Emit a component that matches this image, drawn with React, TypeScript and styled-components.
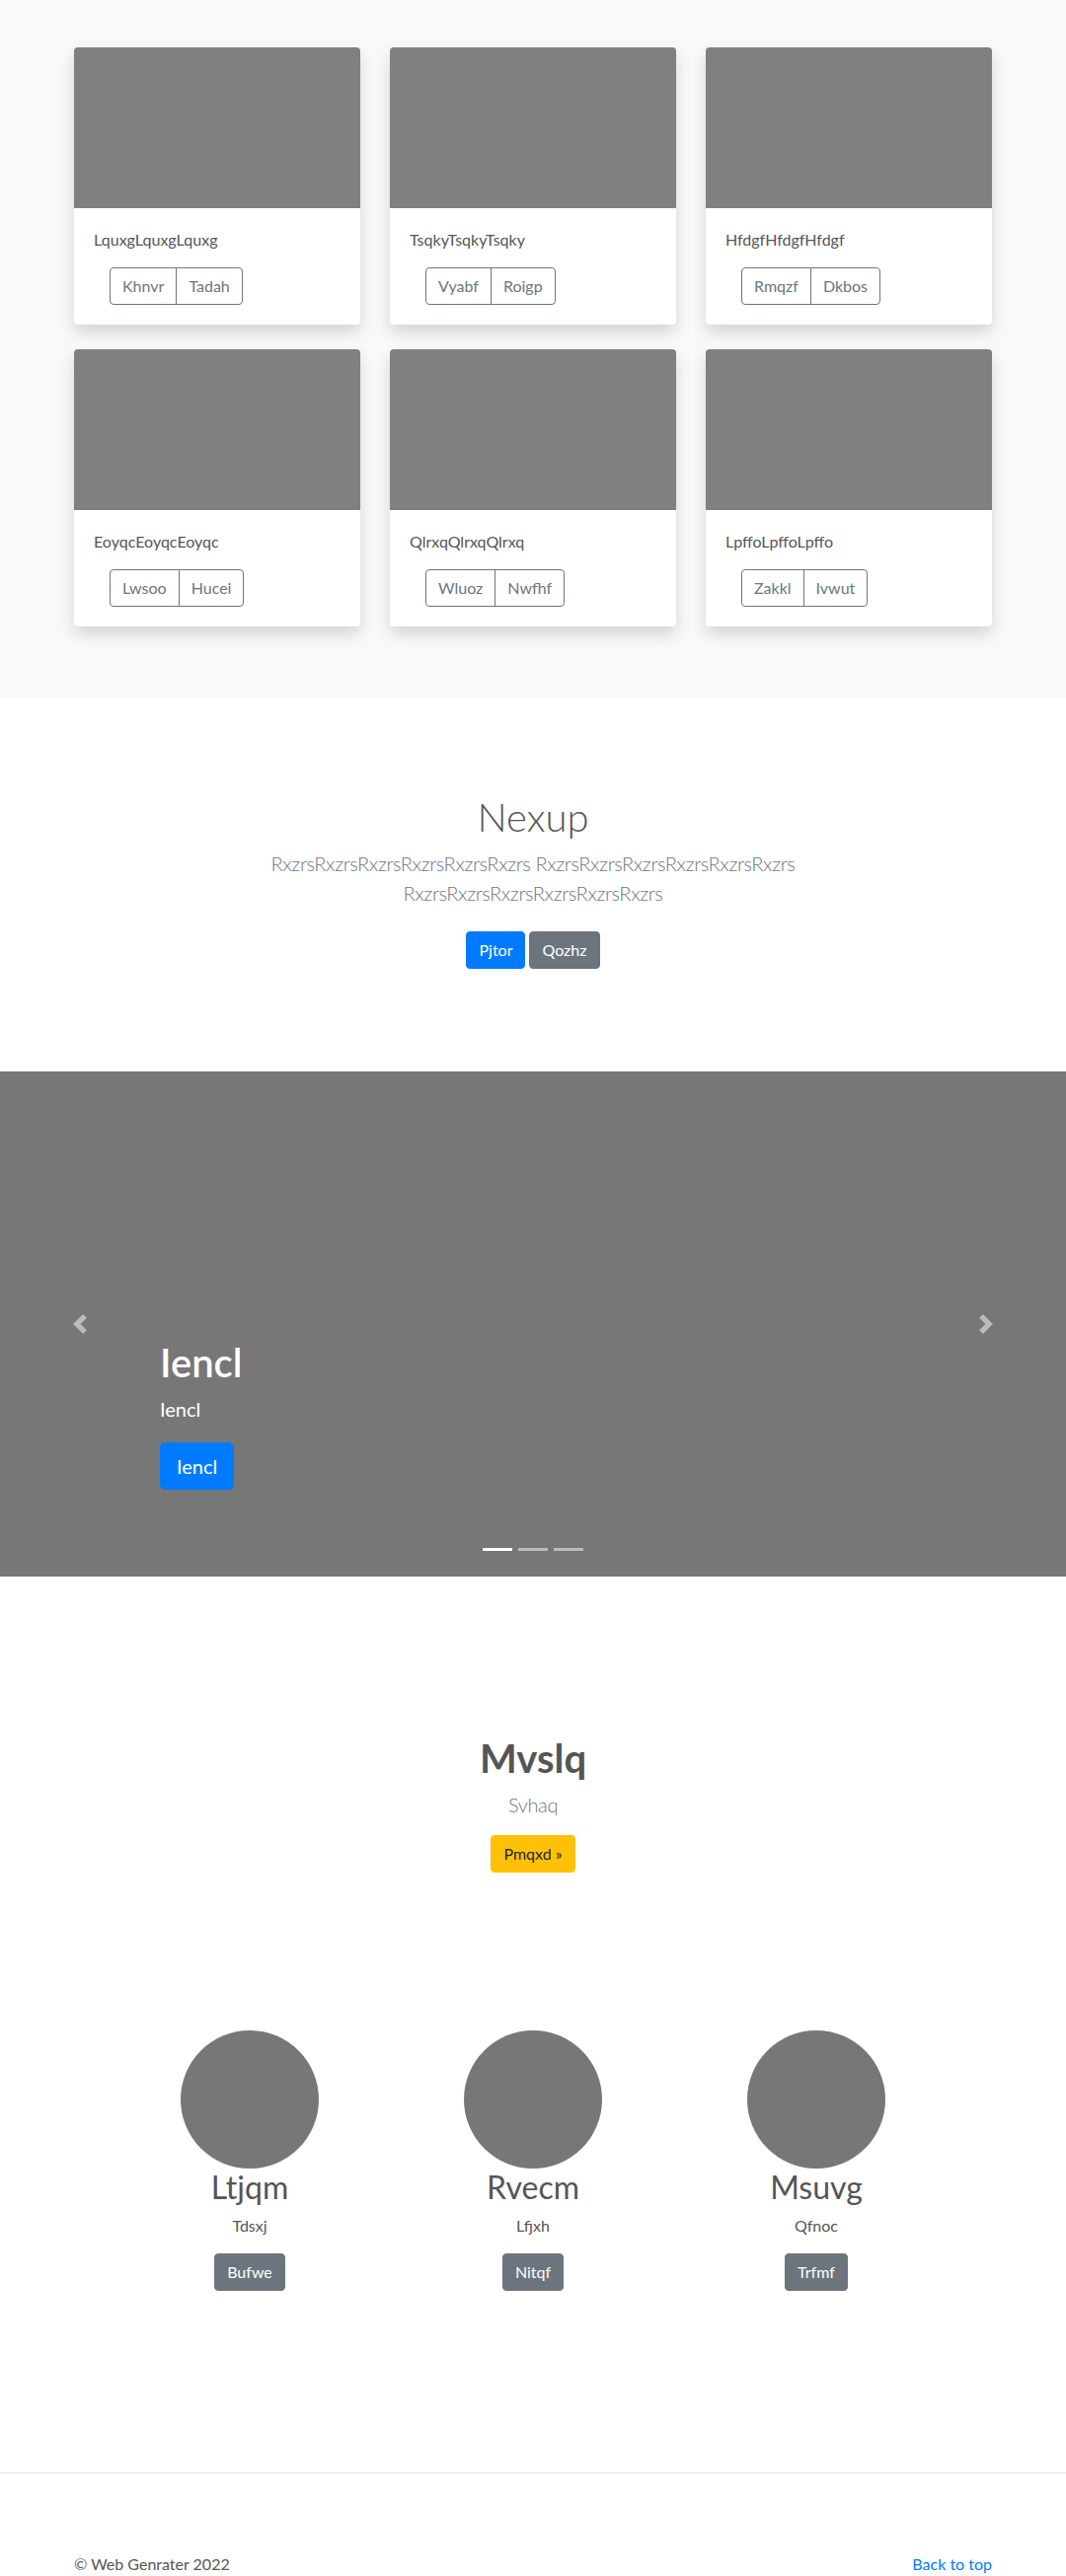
import React from 'react';
import styled, { createGlobalStyle, css } from 'styled-components';

const GlobalStyle = createGlobalStyle`
  *, *::before, *::after { box-sizing: border-box; }
  html, body { margin: 0; padding: 0; }
  body {
    font-family: Lato, "Open Sans", sans-serif;
    font-size: 16px;
    line-height: 1.5;
    color: #555;
    background: #fff;
  }
`;

type Variant = 'primary' | 'secondary' | 'warning';

const variants: Record<Variant, ReturnType<typeof css>> = {
  primary: css`background: #007bff; border-color: #007bff; color: #fff;`,
  secondary: css`background: #6c757d; border-color: #6c757d; color: #fff;`,
  warning: css`background: #ffc107; border-color: #ffc107; color: #212529;`,
};

const Btn = styled.button<{ $variant: Variant; $lg?: boolean }>`
  display: inline-block;
  font-family: inherit;
  font-weight: 400;
  border: 1px solid transparent;
  border-radius: ${(p) => (p.$lg ? '5px' : '4px')};
  font-size: ${(p) => (p.$lg ? '20px' : '16px')};
  line-height: ${(p) => (p.$lg ? '30px' : '24px')};
  padding: ${(p) => (p.$lg ? '8px 16px' : '6px 12px')};
  cursor: pointer;
  ${(p) => variants[p.$variant]}
`;

/* ---------- Album ---------- */
const AlbumSection = styled.section`
  background: #f8f9fa;
  padding: 48px 0 73px;
`;

const Container = styled.div`
  width: 930px;
  margin: 0 auto;
`;

const CardGrid = styled.div`
  display: grid;
  grid-template-columns: repeat(3, 290px);
  column-gap: 30px;
  row-gap: 25px;
`;

const Card = styled.div`
  background: #fff;
  border-radius: 4px;
  overflow: hidden;
  box-shadow: 0 8px 16px rgba(0, 0, 0, 0.15);
`;

const CardImage = styled.div`
  height: 163px;
  background: #808080;
`;

const CardBody = styled.div`
  padding: 20px;
`;

const CardText = styled.p`
  margin: 0 0 16px;
  font-size: 16px;
  line-height: 24px;
  color: #555;
`;

const BtnGroup = styled.div`
  display: inline-flex;
  margin-left: 16px;
`;

const OutlineBtn = styled.button`
  font-family: inherit;
  font-size: 16px;
  line-height: 24px;
  padding: 6px 12px;
  background: transparent;
  color: #6c757d;
  border: 1px solid #6c757d;
  border-radius: 0;
  cursor: pointer;
  &:first-child { border-radius: 4px 0 0 4px; }
  &:last-child { border-radius: 0 4px 4px 0; margin-left: -1px; }
`;

/* ---------- Jumbotron ---------- */
const Jumbotron = styled.section`
  padding: 96px 0;
  text-align: center;
  background: #fff;
`;

const JumboInner = styled.div`
  max-width: 610px;
  margin: 0 auto;
`;

const JumboTitle = styled.h1`
  margin: 0 0 8px;
  font-size: 40px;
  line-height: 48px;
  font-weight: 300;
  color: #555;
`;

const Lead = styled.p`
  margin: 0 0 16px;
  font-size: 20px;
  line-height: 30px;
  font-weight: 300;
  letter-spacing: -0.35px;
  color: #6c757d;
`;

const ButtonRow = styled.div`
  display: flex;
  justify-content: center;
  gap: 4px;
  padding: 8px 0;
`;

/* ---------- Carousel ---------- */
const Carousel = styled.section`
  position: relative;
  height: 512px;
  background: #777;
  overflow: hidden;
`;

const Control = styled.button<{ $side: 'prev' | 'next' }>`
  position: absolute;
  top: 0;
  bottom: 0;
  ${(p) => (p.$side === 'prev' ? 'left: 0;' : 'right: 0;')}
  width: 15%;
  display: flex;
  align-items: center;
  justify-content: center;
  background: none;
  border: 0;
  padding: 0;
  opacity: 0.5;
  cursor: pointer;
`;

const Caption = styled.div`
  position: absolute;
  left: 15%;
  right: 15%;
  bottom: 88px;
  color: #fff;
  text-align: left;
`;

const CaptionTitle = styled.h1`
  margin: 0 0 8px;
  font-size: 40px;
  line-height: 48px;
  font-weight: 600;
`;

const CaptionText = styled.p`
  margin: 0 0 19px;
  font-size: 20px;
  line-height: 30px;
`;

const Indicators = styled.ol`
  position: absolute;
  left: 0;
  right: 0;
  bottom: 26px;
  display: flex;
  justify-content: center;
  gap: 6px;
  margin: 0;
  padding: 0;
  list-style: none;
`;

const Indicator = styled.li<{ $active?: boolean }>`
  width: 30px;
  height: 3px;
  background: #fff;
  opacity: ${(p) => (p.$active ? 1 : 0.5)};
`;

/* ---------- Feature ---------- */
const Feature = styled.section`
  padding-top: 160px;
  text-align: center;
`;

const FeatureTitle = styled.h1`
  margin: 0 0 8px;
  font-size: 40px;
  line-height: 48px;
  font-weight: 700;
  color: #555;
`;

/* ---------- Marketing ---------- */
const Marketing = styled.section`
  padding-top: 160px;
  display: grid;
  grid-template-columns: repeat(3, 287px);
  justify-content: center;
  text-align: center;
`;

const Column = styled.div`
  display: flex;
  flex-direction: column;
  align-items: center;
`;

const Circle = styled.div`
  width: 140px;
  height: 140px;
  border-radius: 50%;
  background: #777;
`;

const ColTitle = styled.h2`
  margin: 0 0 8px;
  font-size: 32px;
  line-height: 38px;
  font-weight: 400;
  color: #555;
`;

const ColText = styled.p`
  margin: 0 0 16px;
  font-size: 16px;
  line-height: 24px;
  color: #555;
`;

/* ---------- Footer ---------- */
const Divider = styled.hr`
  margin: 184px 0 0;
  border: 0;
  border-top: 1px solid rgba(0, 0, 0, 0.1);
`;

const Footer = styled.footer`
  width: 930px;
  margin: 0 auto;
  padding: 80px 0 16px;
  display: flex;
  justify-content: space-between;
  line-height: 24px;
`;

const FooterText = styled.p`
  margin: 0;
  color: #555;
`;

const FooterLink = styled.a`
  color: #007bff;
  text-decoration: none;
`;

const Chevron = ({ dir }: { dir: 'left' | 'right' }) => (
  <svg width="20" height="20" viewBox="0 0 8 8" fill="#fff" aria-hidden="true">
    {dir === 'left' ? (
      <path d="M5.25 0l-4 4 4 4 1.5-1.5L4.25 4l2.5-2.5L5.25 0z" />
    ) : (
      <path d="M2.75 0l-1.5 1.5L3.75 4l-2.5 2.5L2.75 8l4-4-4-4z" />
    )}
  </svg>
);

const cards = [
  { title: 'LquxgLquxgLquxg', a: 'Khnvr', b: 'Tadah' },
  { title: 'TsqkyTsqkyTsqky', a: 'Vyabf', b: 'Roigp' },
  { title: 'HfdgfHfdgfHfdgf', a: 'Rmqzf', b: 'Dkbos' },
  { title: 'EoyqcEoyqcEoyqc', a: 'Lwsoo', b: 'Hucei' },
  { title: 'QlrxqQlrxqQlrxq', a: 'Wluoz', b: 'Nwfhf' },
  { title: 'LpffoLpffoLpffo', a: 'Zakkl', b: 'Ivwut' },
];

const people = [
  { name: 'Ltjqm', text: 'Tdsxj', btn: 'Bufwe' },
  { name: 'Rvecm', text: 'Lfjxh', btn: 'Nitqf' },
  { name: 'Msuvg', text: 'Qfnoc', btn: 'Trfmf' },
];

const word = 'Rxzrs'.repeat(6);

export default function App() {
  return (
    <>
      <GlobalStyle />
      <AlbumSection>
        <Container>
          <CardGrid>
            {cards.map((c) => (
              <Card key={c.title}>
                <CardImage />
                <CardBody>
                  <CardText>{c.title}</CardText>
                  <BtnGroup>
                    <OutlineBtn>{c.a}</OutlineBtn>
                    <OutlineBtn>{c.b}</OutlineBtn>
                  </BtnGroup>
                </CardBody>
              </Card>
            ))}
          </CardGrid>
        </Container>
      </AlbumSection>

      <Jumbotron>
        <JumboInner>
          <JumboTitle>Nexup</JumboTitle>
          <Lead>{`${word} ${word} ${word}`}</Lead>
          <ButtonRow>
            <Btn $variant="primary">Pjtor</Btn>
            <Btn $variant="secondary">Qozhz</Btn>
          </ButtonRow>
        </JumboInner>
      </Jumbotron>

      <Carousel>
        <Indicators>
          <Indicator $active />
          <Indicator />
          <Indicator />
        </Indicators>
        <Caption>
          <CaptionTitle>Iencl</CaptionTitle>
          <CaptionText>Iencl</CaptionText>
          <Btn $variant="primary" $lg>Iencl</Btn>
        </Caption>
        <Control $side="prev" aria-label="Previous">
          <Chevron dir="left" />
        </Control>
        <Control $side="next" aria-label="Next">
          <Chevron dir="right" />
        </Control>
      </Carousel>

      <Feature>
        <FeatureTitle>Mvslq</FeatureTitle>
        <Lead>Svhaq</Lead>
        <Btn $variant="warning">Pmqxd »</Btn>
      </Feature>

      <Marketing>
        {people.map((p) => (
          <Column key={p.name}>
            <Circle />
            <ColTitle>{p.name}</ColTitle>
            <ColText>{p.text}</ColText>
            <Btn $variant="secondary">{p.btn}</Btn>
          </Column>
        ))}
      </Marketing>

      <Divider />
      <Footer>
        <FooterText>© Web Genrater 2022</FooterText>
        <FooterLink href="#">Back to top</FooterLink>
      </Footer>
    </>
  );
}
